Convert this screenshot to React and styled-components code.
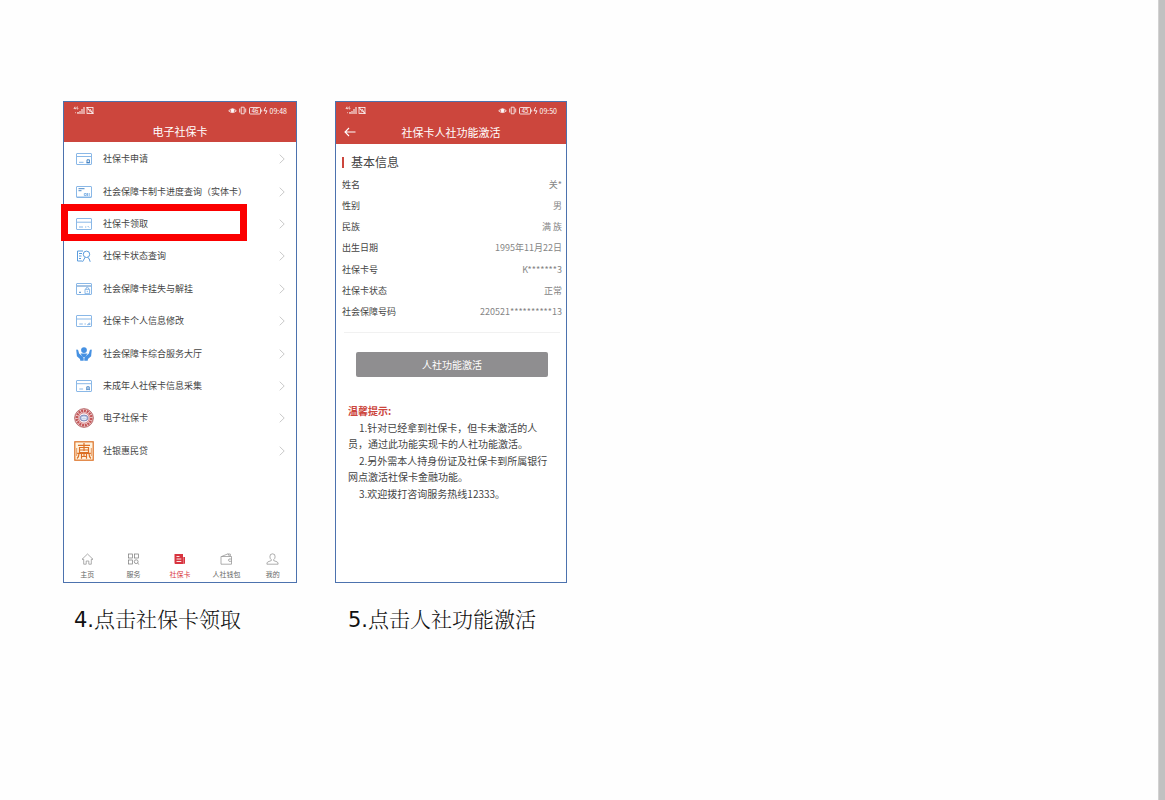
import React from 'react'
import styled, { createGlobalStyle, css } from 'styled-components'

const red = '#cc463d'
const blue = '#7db0e4'

const GlobalStyle = createGlobalStyle`
  * {
    box-sizing: border-box;
  }

  body {
    margin: 0;
    background: #fefefe;
    font-family: 'Noto Sans CJK SC', sans-serif;
    color: #444;
  }
`

const Page = styled.div`
  display: flex;
  min-height: 100vh;
`

const Steps = styled.main`
  flex: 1;
  display: flex;
  align-items: flex-start;
  gap: 38px;
  padding: 101px 63px 40px;
`

const Rail = styled.div`
  width: 7px;
  background: #c1c1c1;
  border-left: 1px solid #d2d2d2;
`

const Step = styled.figure`
  flex: 0 1 ${(props) => props.$width};
  margin: 0;
`

const Caption = styled.figcaption`
  margin: 22px 0 0 ${(props) => props.$indent};
  font-family: 'DejaVu Sans', 'Noto Serif CJK SC', 'Noto Sans CJK SC', serif;
  font-size: 21px;
  font-weight: 300;
  line-height: 30px;
  white-space: nowrap;
  color: #111;
`

const StepNumber = styled.span`
  font-weight: 400;
`

const Phone = styled.section`
  display: flex;
  flex-direction: column;
  min-height: 482px;
  border: 1px solid #4c72ae;
  background: #fff;
`

const Header = styled.header`
  background: ${red};
  color: #fff;
`

const StatusBar = styled.div`
  display: flex;
  align-items: center;
  justify-content: space-between;
  height: 17px;
  padding: 0 9px;
  font-size: 7px;
  line-height: 8px;
`

const StatusGroup = styled.div`
  display: flex;
  align-items: center;
  gap: 2px;
`

const TitleBar = styled.div`
  display: grid;
  grid-template-columns: 12px 1fr 12px;
  align-items: center;
  height: ${(props) => props.$height};
  padding: 0 8px;
`

const Title = styled.h1`
  grid-column: 2;
  margin: 0;
  font-size: 11px;
  font-weight: 400;
  line-height: 16px;
  text-align: center;
`

const BackButton = styled.button`
  display: flex;
  padding: 0;
  border: 0;
  background: none;
  color: #fff;
`

const Menu = styled.ul`
  display: grid;
  grid-auto-rows: 1fr;
  height: 324px;
  margin: 1px 0 0;
  padding: 0;
  list-style: none;
`

const MenuItem = styled.li`
  position: relative;
  display: flex;
`

const MenuLink = styled.a`
  flex: 1;
  display: grid;
  grid-template-columns: 20px 1fr 6px;
  align-items: center;
  gap: 9px;
  padding: 0 11px 0 10px;
  font-size: 9px;
  line-height: 12px;
  white-space: nowrap;
  color: #444;
  text-decoration: none;

  svg {
    display: block;
    margin: 0 auto;
  }
`

const Highlight = styled.span`
  position: absolute;
  top: -4px;
  bottom: -1px;
  left: -3px;
  width: 186px;
  border: 7px solid #fb0000;
  pointer-events: none;
`

const TabBar = styled.nav`
  display: grid;
  grid-template-columns: repeat(5, 1fr);
  margin-top: auto;
  padding-bottom: 3px;
`

const Tab = styled.a`
  display: flex;
  flex-direction: column;
  align-items: center;
  gap: 4px;
  font-size: 7px;
  line-height: 10px;
  white-space: nowrap;
  text-decoration: none;
  color: #666;

  ${(props) => props.$active && css`
    color: #d8343f;
  `}
`

const Info = styled.div`
  padding: 10px 4px 0 6px;
`

const InfoTitle = styled.h2`
  display: flex;
  align-items: center;
  gap: 7px;
  margin: 0;
  font-size: 12px;
  font-weight: 400;
  line-height: 16px;

  &::before {
    content: '';
    width: 2px;
    height: 11px;
    background: ${red};
  }
`

const InfoList = styled.dl`
  display: grid;
  grid-auto-rows: 1fr;
  height: 149px;
  margin: 4px 0 0;
  font-size: 9px;
  line-height: 12px;
`

const InfoRow = styled.div`
  display: flex;
  align-items: center;
  justify-content: space-between;

  dd {
    margin: 0;
    color: #858585;
  }
`

const Divider = styled.hr`
  margin: 9px 6px 19px 8px;
  border: 0;
  border-top: 1px solid #f1f1f1;
`

const ActivateButton = styled.button`
  display: block;
  height: 25px;
  margin: 0 18px 0 20px;
  padding: 0;
  border: 0;
  border-radius: 2px;
  background: #8f8e90;
  color: #fff;
  font-family: inherit;
  font-size: 10px;
  line-height: 16px;
`

const Tips = styled.div`
  display: grid;
  gap: 1px;
  margin: 26px 12px 0;
  font-size: 10px;
  line-height: 16px;

  h3 {
    margin: 0;
    font-size: 10px;
    font-weight: 700;
    color: ${red};
  }

  p {
    margin: 0;
    text-indent: 11px;
  }
`

const Status = ({ time, battery }) => (
  <StatusBar>
    <svg width="22" height="9" viewBox="0 0 22 9" fill="none" stroke="#fff" strokeWidth="0.8">
      <path d="M2 0.7L0.9 2.5h1.8M2.3 1.3v2M5 1H3.9v2H5V2.2M2 6.7h1M4.5 6.7h1" strokeWidth="0.6" />
      <path d="M5 6v2M7 5v3M9 3v5M11 1v7" strokeWidth="1" />
      <rect x="14" y="1.5" width="6" height="6" />
      <path d="M14.5 3l2 1.3 1.5-1M16 6.5l2-2 1.5 2.5M13.5 1l7 7" />
    </svg>
    <StatusGroup>
      <svg width="40" height="9" viewBox="0 0 40 9" fill="none" stroke="#fff" strokeWidth="0.8">
        <path d="M0.7 4.8Q4.5 0.8 8.3 4.8Q4.5 8.3 0.7 4.8z" />
        <circle cx="4.5" cy="4.6" r="1.5" fill="#fff" />
        <path d="M13.2 1.2h3v6.6h-3zM11.7 2.5v4M17.7 2.5v4" />
        <rect x="21.5" y="1.5" width="11" height="6.5" rx="1" />
        <path d="M33.7 3.6v2.2" />
        <path d="M37.6 1.2L36 4.8h3L37.4 8" strokeWidth="0.9" />
        <text x="27" y="6.9" textAnchor="middle" fontSize="6" fill="#fff" stroke="none">{battery}</text>
      </svg>
      <span>{time}</span>
    </StatusGroup>
  </StatusBar>
)

const CardIcon = ({ children }) => (
  <svg width="16" height="12" viewBox="0 0 16 12" fill="none" stroke={blue} strokeWidth="0.9">
    <rect x="0.5" y="0.5" width="15" height="11" rx="0.5" />
    {children}
  </svg>
)

const Chevron = () => (
  <svg width="6" height="10" viewBox="0 0 6 10" fill="none" stroke="#c4c4c4" strokeWidth="0.9">
    <path d="M0.7 0.7L5.2 5L0.7 9.3" />
  </svg>
)

const icons = {
  apply: (
    <CardIcon>
      <path d="M1 3.5h14M3 9.3h4.5" />
      <path d="M11 6.8h2.4v2.8H11zM10.3 9.8h3.8" stroke="#397cc1" />
    </CardIcon>
  ),
  progress: (
    <CardIcon>
      <path d="M2.5 2.7h6M2.500 4.700h3" stroke="#397cc1" />
      <path d="M8.3 7.5h2v2h-2zM11.5 7v3M13.2 7v3M1 11h14" />
    </CardIcon>
  ),
  receive: (
    <CardIcon>
      <path d="M1 4.200h14M3 9h4M9 9h1.300M11.700 8l1.400 1.500" />
    </CardIcon>
  ),
  query: (
    <svg width="16" height="13" viewBox="0 0 16 13" fill="none" stroke="#5b9cdd">
      <path d="M7 1H1.5v10H6M3 3.5h3M3 6h2.5M3 8.5h2" />
      <circle cx="10.5" cy="4.3" r="3.2" />
      <path d="M9.2 7.2L6.5 11.8M11.7 7.2q1.8 1.3 2.5 4.6" />
    </svg>
  ),
  loss: (
    <CardIcon>
      <path d="M1 3h14M3 9.3h2" stroke="#397cc1" />
      <path d="M9 6.3h4.6v4.4H9zM10 6.2V5q1.3-1.4 2.6 0v1.2M11.3 7.8v1.4" />
    </CardIcon>
  ),
  edit: (
    <CardIcon>
      <path d="M1 4h14M3.3 9h3.5M8.5 9h1.3M11.5 9.8l2-2 .6 1.6z" />
    </CardIcon>
  ),
  hall: (
    <svg width="16" height="14" viewBox="0 0 16 14" fill="#4691e2">
      <circle cx="8" cy="3.1" r="2.9" />
      <path d="M4.5 6.6h7L9.3 10H6.7z" />
      <path d="M0.2 2.7q1.300-.6 2 .5l.9 3.400 4.200 3.500q.6 1.200.4 3.700H4.300L4 12 .9 9.300z" />
      <path d="M15.800 2.700q-1.300-.6-2 .5l-.9 3.400-4.200 3.500q-.6 1.200-.4 3.700h3.400L12 12l3.100-2.700z" />
    </svg>
  ),
  minor: (
    <CardIcon>
      <path d="M1 3.7h14M3.3 9h3.8" />
      <path d="M10.8 6.8h2.4v2.4h-2.4zM10.8 9v1.2M13.3 9v1.2" stroke="#397cc1" />
    </CardIcon>
  ),
  ecard: (
    <svg width="20" height="20" viewBox="0 0 20 20" fill="none">
      <circle cx="10" cy="10" r="9.3" fill="#f5dddd" stroke="#a94e50" strokeWidth="0.9" />
      <circle cx="10" cy="10" r="7.2" stroke="#c4585a" strokeWidth="2.6" strokeDasharray="2.1 0.7" />
      <circle cx="10" cy="10" r="5.2" fill="#f7f0f4" stroke="#c75557" strokeWidth="0.6" />
      <ellipse cx="10" cy="10" rx="4" ry="2.9" fill="#b7c6e5" stroke="#747eae" strokeWidth="0.8" />
      <path d="M7.5 10q2.5-2 5 0M8 11.2h4" stroke="#fff" strokeWidth="0.8" />
    </svg>
  ),
  loan: (
    <svg width="20" height="20" viewBox="0 0 20 20" fill="none" stroke="#dc7024">
      <rect x="0.8" y="0.8" width="18.4" height="18.4" strokeWidth="1.2" fill="#fff3df" />
      <path d="M10 2v8M4 4.4h12M5.5 6.5h9v5h-9zM5.5 9h9M3.2 12.4h13.6" strokeWidth="1.2" />
      <path d="M5 12.5q0 3.5-2 5M7.5 13v4.7M10 12.5v3M12.5 13v4.7M15 12.5q0 3.5 2 5M8 15.5h4" strokeWidth="1.2" />
      <path d="M2.7 7v8M17.3 7v8" strokeWidth="0.7" />
    </svg>
  ),
}

const menu = [
  { icon: 'apply', label: '社保卡申请' },
  { icon: 'progress', label: '社会保障卡制卡进度查询（实体卡）' },
  { icon: 'receive', label: '社保卡领取', highlighted: true },
  { icon: 'query', label: '社保卡状态查询' },
  { icon: 'loss', label: '社会保障卡挂失与解挂' },
  { icon: 'edit', label: '社保卡个人信息修改' },
  { icon: 'hall', label: '社会保障卡综合服务大厅' },
  { icon: 'minor', label: '未成年人社保卡信息采集' },
  { icon: 'ecard', label: '电子社保卡' },
  { icon: 'loan', label: '社银惠民贷' },
]

const TabIcon = ({ children }) => (
  <svg width="13" height="12" viewBox="0 0 13 12" fill="none" stroke="#8b8b8b" strokeWidth="0.7">
    {children}
  </svg>
)

const tabs = [
  {
    label: '主页',
    icon: <path d="M1 6.3L6.5 1 12 6.3h-1.700v4.900H7.800V8H5.200v3.200H2.700V6.300z" />,
  },
  {
    label: '服务',
    icon: (
      <g stroke="#777">
        <rect x="1.5" y="1" width="4" height="4" />
        <rect x="7.5" y="1" width="4" height="4" />
        <rect x="1.5" y="7" width="4" height="4" />
        <circle cx="9.2" cy="8.7" r="1.9" />
        <path d="M10.6 10.1l1.6 1.5" />
      </g>
    ),
  },
  {
    label: '社保卡',
    active: true,
    icon: (
      <g stroke="none">
        <path d="M1.500 1H10v10H2.500q-1 0-1-1zM10.300 4H12v6q0 1-1 1h-.7z" fill="#d8343f" />
        <path d="M3.500 3.500h3M3.500 6h4.800M3.500 8.500h4.800" stroke="#fff" strokeWidth="0.9" />
      </g>
    ),
  },
  {
    label: '人社钱包',
    icon: <path d="M1 3.5h10.5v7.7H1zM2 3.3l6-2.5 1.5 2.5M8 1h2.3v2.3M11.500 6H9q-1.2 1.2 0 2.3h2.5" />,
  },
  {
    label: '我的',
    icon: <path d="M6.5 0.8q2.8 0 2.6 3-.1 2-1.4 2.8v1l3.5 1.3q1 .8.9 2.3H.9q-.1-1.5.9-2.3l3.5-1.3v-1Q4 5.8 3.9 3.8 3.7.8 6.5.8z" />,
  },
]

const info = [
  ['姓名', '关*'],
  ['性别', '男'],
  ['民族', '满 族'],
  ['出生日期', '1995年11月22日'],
  ['社保卡号', 'K*******3'],
  ['社保卡状态', '正常'],
  ['社会保障号码', '220521**********13'],
]

const CardScreen = () => (
  <Phone>
    <Header>
      <Status time="09:48" battery="46" />
      <TitleBar $height="23px">
        <Title>电子社保卡</Title>
      </TitleBar>
    </Header>
    <Menu>
      {menu.map((item) => (
        <MenuItem key={item.icon}>
          <MenuLink href="#">
            {icons[item.icon]}
            <span>{item.label}</span>
            <Chevron />
          </MenuLink>
          {item.highlighted && <Highlight />}
        </MenuItem>
      ))}
    </Menu>
    <TabBar>
      {tabs.map((tab) => (
        <Tab key={tab.label} href="#" $active={tab.active}>
          <TabIcon>{tab.icon}</TabIcon>
          <span>{tab.label}</span>
        </Tab>
      ))}
    </TabBar>
  </Phone>
)

const ActivateScreen = () => (
  <Phone>
    <Header>
      <Status time="09:50" battery="45" />
      <TitleBar $height="25px">
        <BackButton aria-label="返回">
          <svg width="12" height="10" viewBox="0 0 12 10" fill="none" stroke="currentColor" strokeWidth="1.1">
            <path d="M11.5 5H1M5 1L1 5l4 4" />
          </svg>
        </BackButton>
        <Title>社保卡人社功能激活</Title>
      </TitleBar>
    </Header>
    <Info>
      <InfoTitle>基本信息</InfoTitle>
      <InfoList>
        {info.map(([label, value]) => (
          <InfoRow key={label}>
            <dt>{label}</dt>
            <dd>{value}</dd>
          </InfoRow>
        ))}
      </InfoList>
    </Info>
    <Divider />
    <ActivateButton>人社功能激活</ActivateButton>
    <Tips>
      <h3>温馨提示:</h3>
      <p>1.针对已经拿到社保卡，但卡未激活的人员，通过此功能实现卡的人社功能激活。</p>
      <p>2.另外需本人持身份证及社保卡到所属银行网点激活社保卡金融功能。</p>
      <p>3.欢迎拨打咨询服务热线12333。</p>
    </Tips>
  </Phone>
)

const App = () => (
  <Page lang="zh-CN">
    <GlobalStyle />
    <Steps>
      <Step $width="234px">
        <CardScreen />
        <Caption $indent="11px"><StepNumber>4.</StepNumber>点击社保卡领取</Caption>
      </Step>
      <Step $width="232px">
        <ActivateScreen />
        <Caption $indent="13px"><StepNumber>5.</StepNumber>点击人社功能激活</Caption>
      </Step>
    </Steps>
    <Rail />
  </Page>
)

export default App
